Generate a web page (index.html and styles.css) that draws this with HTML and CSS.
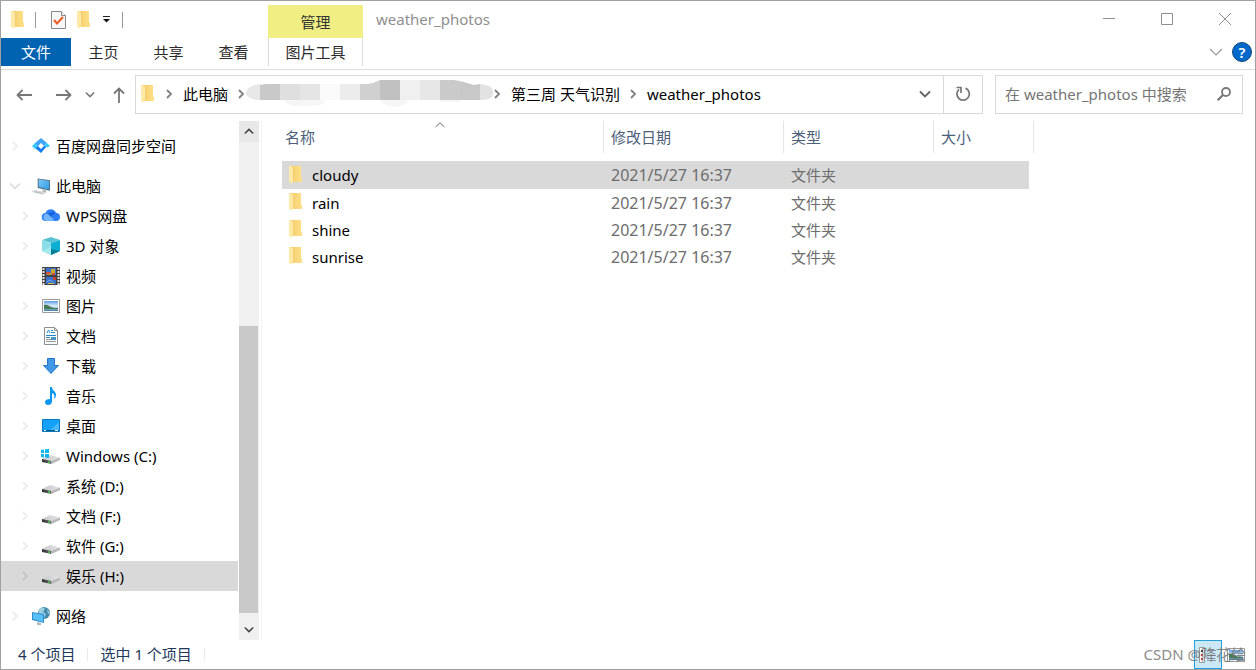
FILE: index.html
```html
<!DOCTYPE html>
<html lang="zh-CN">
<head>
<meta charset="utf-8">
<title>weather_photos</title>
<link rel="stylesheet" href="styles.css">
</head>
<body>
<svg class="defs" aria-hidden="true">
  <defs>
    <linearGradient id="gFolder" x1="0" x2="1"><stop offset="0" stop-color="#f4cd6b"/><stop offset="1" stop-color="#ffe08a"/></linearGradient>
    <linearGradient id="gScreen" x1="0" y1="0" x2="1" y2="1"><stop offset="0" stop-color="#7cc8f5"/><stop offset="1" stop-color="#2d9be8"/></linearGradient>
    <linearGradient id="gSky" x1="0" y1="0" x2="0" y2="1"><stop offset="0" stop-color="#5d9be8"/><stop offset=".5" stop-color="#dff0fa"/><stop offset="1" stop-color="#3d7f9e"/></linearGradient>
    <linearGradient id="gDrive" x1="0" x2="1"><stop offset="0" stop-color="#c9c9cc"/><stop offset="1" stop-color="#e4e4e6"/></linearGradient>
    <linearGradient id="gFront" x1="0" x2="1"><stop offset="0" stop-color="#2c2e30"/><stop offset="1" stop-color="#6b6d70"/></linearGradient>
    <symbol id="folder" viewBox="0 0 13 18"><path d="M2 0h10v11l1 1v4H2z" fill="url(#gFolder)"/><path d="M0 0h1.500l3 2v12.500L3 17.500 0 16z" fill="#ffe9a6"/><path d="M4.500 2v13" stroke="#eec565" stroke-width=".6"/></symbol>
    <symbol id="right" viewBox="0 0 6 10"><path d="M1 1l4 4-4 4" fill="none" stroke="currentColor" stroke-width="1.800"/></symbol>
    <symbol id="down" viewBox="0 0 12 8"><path d="M1 1.500l5 5 5-5" fill="none" stroke="currentColor" stroke-width="1.800"/></symbol>
    <symbol id="drive" viewBox="0 0 18 18"><path d="M0 12l8-4 10 2.500-8 4z" fill="url(#gDrive)"/><path d="M0 12l9.500 2v3L0 15z" fill="url(#gFront)"/><path d="M9.500 14L18 10.500V13l-8.500 4z" fill="#b7b7ba"/><path d="M6 14.200l2 .4v1.400l-2-.4z" fill="#3ddc3d"/></symbol>
    <symbol id="picture" viewBox="0 0 18 18"><path d="M.5 2.500h17v13H.5z" fill="#fff" stroke="#9b9b9b"/><path d="M2 4h14v10H2z" fill="url(#gSky)"/><path d="M2 8c3-1 5 1 7 2s4 1 7 1v1H2z" fill="#487a56"/></symbol>
  </defs>
</svg>
<div class="window">
  <header class="titlebar">
    <div class="quick">
      <svg class="folder" aria-hidden="true"><use href="#folder"/></svg>
      <span class="bar"></span>
      <button class="plain" aria-label="属性"><svg width="15" height="18" viewBox="0 0 15 18"><path d="M.5.5h10l4 4v13H.5z" fill="#f7f7f7" stroke="#8a8a8a"/><path d="M10.500.5v4h4" fill="#fff" stroke="#8a8a8a"/><path d="M3 9l3 3.500 6-6.500" fill="none" stroke="#f15a24" stroke-width="2"/></svg></button>
      <button class="plain new" aria-label="新建文件夹"><svg class="folder"><use href="#folder"/></svg></button>
      <button class="plain more" aria-label="自定义快速访问工具栏"><svg width="7" height="7" viewBox="0 0 7 7"><path d="M0 .5h7" stroke="#222"/><path d="M0 3h7L3.500 6.500z" fill="#111"/></svg></button>
      <span class="bar"></span>
    </div>
    <div class="context">管理</div>
    <h1 class="title">weather_photos</h1>
    <div class="controls">
      <button class="plain" aria-label="最小化"><svg width="12" height="12" viewBox="0 0 12 12"><path d="M0 5.500h12" stroke="#8f8f8f"/></svg></button>
      <button class="plain" aria-label="最大化"><svg width="12" height="12" viewBox="0 0 12 12"><path d="M.5.500h11v11H.5z" fill="none" stroke="#8f8f8f"/></svg></button>
      <button class="plain" aria-label="关闭"><svg width="12" height="12" viewBox="0 0 12 12"><path d="M0 0l12 12M12 0L0 12" stroke="#8f8f8f"/></svg></button>
    </div>
  </header>
  <nav class="ribbon">
    <button class="tab file">文件</button>
    <button class="tab">主页</button>
    <button class="tab">共享</button>
    <button class="tab">查看</button>
    <button class="tab tools">图片工具</button>
    <div class="ribbon-end">
      <button class="plain expand" aria-label="展开功能区"><svg width="12" height="8" viewBox="0 0 12 8"><path d="M0 1l6 6 6-6" fill="none" stroke="#9a9a9a" stroke-width="1.200"/></svg></button>
      <button class="help" aria-label="帮助">?</button>
    </div>
  </nav>
  <div class="location">
    <div class="arrows">
      <button class="plain" aria-label="后退"><svg width="16" height="12" viewBox="0 0 16 12"><path d="M16 6H1.500M6.500 1l-5 5 5 5" fill="none" stroke="#777" stroke-width="1.800"/></svg></button>
      <button class="plain forward" aria-label="前进"><svg width="16" height="12" viewBox="0 0 16 12"><path d="M0 6h14.500M9.500 1l5 5-5 5" fill="none" stroke="#777" stroke-width="1.800"/></svg></button>
      <button class="plain" aria-label="最近位置"><svg class="recent"><use href="#down"/></svg></button>
      <button class="plain" aria-label="上移"><svg width="12" height="16" viewBox="0 0 12 16"><path d="M6 16V1.500M1 6.500l5-5 5 5" fill="none" stroke="#777" stroke-width="1.800"/></svg></button>
    </div>
    <div class="address">
      <svg class="folder" aria-hidden="true"><use href="#folder"/></svg>
      <svg class="sep"><use href="#right"/></svg>
      <button class="plain">此电脑</button>
      <svg class="sep"><use href="#right"/></svg>
      <svg class="mosaic" width="248" height="28" viewBox="0 0 248 28" aria-hidden="true">
        <path d="M14 4C5 5 0 9 0 13s6 7 14 7z" fill="#e8e8e8"/>
        <path d="M14 5l6-1h14v16H14z" fill="#c9c9c9"/><path d="M34 4h20v16H34z" fill="#dfdfdf"/><path d="M54 4h20v16H54z" fill="#e5e5e5"/><path d="M74 4h20v16H74z" fill="#fafafa"/><path d="M94 4h20v16H94z" fill="#ececec"/><path d="M114 4h8q6-1 12-4v20h-20z" fill="#d0d0d0"/><path d="M134 0h20v20h-20z" fill="#c1c1c1"/><path d="M154 0h20v20h-20z" fill="#f0f0f0"/><path d="M174 0h20v20h-20z" fill="#e6e6e6"/><path d="M194 0h14l6 1v19h-20z" fill="#cacaca"/><path d="M214 1l14 4 6-1v16h-20z" fill="#c8c8c8"/><path d="M234 4c10 1 13 3 13 9 0 5-4 7-13 7z" fill="#e2e2e2"/>
        <path d="M38 20h40v4q-8 2-30 2-8-2-10-6zM134 20h28q-2 7-14 7-10-1-14-7zM194 20h20v2h-20z" fill="#f6f6f6"/>
      </svg>
      <svg class="sep"><use href="#right"/></svg>
      <button class="plain">第三周 天气识别</button>
      <svg class="sep"><use href="#right"/></svg>
      <button class="plain">weather_photos</button>
      <button class="plain history" aria-label="以前的位置"><svg class="chevron"><use href="#down"/></svg></button>
      <button class="plain refresh" aria-label="刷新"><svg width="16" height="16" viewBox="0 0 16 16"><path d="M10.500 2.200A6.200 6.200 0 1 1 4 3.300" fill="none" stroke="#777" stroke-width="1.800"/><path d="M1.500 1.500H6V7" fill="none" stroke="#777" stroke-width="1.700"/></svg></button>
    </div>
    <label class="search">
      <input type="text" placeholder="在 weather_photos 中搜索" aria-label="在 weather_photos 中搜索">
      <svg width="14" height="14" viewBox="0 0 14 14"><circle cx="9" cy="5" r="4" fill="none" stroke="#777" stroke-width="1.800"/><path d="M6 8l-5.300 5.300" stroke="#777" stroke-width="2.200"/></svg>
    </label>
  </div>
  <div class="body">
    <nav class="tree">
      <a class="node root" href="#"><svg class="twist"><use href="#right"/></svg><svg class="icon" viewBox="0 0 18 18"><path d="M9 1l6 5-3 3-3-3-3 3-3-3z" fill="#42a5ff"/><path d="M3 6l3 3 3 3 3-3h3l-6 7-6-5z" fill="#167bf2"/><path d="M0 9l3-3 3 3-3 3zM12 9l3-3 3 3-3 1.500z" fill="#36c9ff"/></svg>百度网盘同步空间</a>
      <a class="node root" href="#"><svg class="twist open"><use href="#down"/></svg><svg class="icon" viewBox="0 0 19 18"><path d="M6 1l13 2v11L6 11z" fill="#526b7b"/><path d="M7 2l11 1.800v9L7 10z" fill="url(#gScreen)"/><path d="M11 12l4 1v3h-4z" fill="#b6bdc2"/><path d="M-1 15l5-2 11 3-4 2z" fill="#d5d9dc"/><path d="M2 15l9 2" stroke="#b4babd"/></svg>此电脑</a>
      <a class="node" href="#"><svg class="twist"><use href="#right"/></svg><svg class="icon" viewBox="0 0 18 18"><path d="M4 14a4 4 0 0 1-.5-8A5.500 5.500 0 0 1 14 6a4 4 0 0 1 0 8z" fill="#2d7ff5"/><path d="M3 7c4-1 7 3 9 7H4a4 4 0 0 1-1-7z" fill="#73b6ff"/><path d="M6 7c3-3 6-2 8-1-2 1-4 2-5 4z" fill="#1266df"/></svg>WPS网盘</a>
      <a class="node" href="#"><svg class="twist"><use href="#right"/></svg><svg class="icon" viewBox="0 0 18 18"><path d="M0 3l9-3 9 3-9 3z" fill="#58c2d3"/><path d="M0 3l9 3v12l-9-4z" fill="#8cdfe8"/><path d="M18 3L9 6v12l9-4z" fill="#0eaed0"/><path d="M0 14l9-4v8z" fill="#a5e9ef"/><path d="M9 12l9 2-9 4z" fill="#087e96"/></svg>3D 对象</a>
      <a class="node" href="#"><svg class="twist"><use href="#right"/></svg><svg class="icon" viewBox="0 0 18 18"><path d="M0 0h18v18H0z" fill="#414141"/><path d="M1.500 1v17M16.500 1v17" stroke="#e5e5e5" stroke-width="2" stroke-dasharray="2 1"/><path d="M4 1h10v7H4zM4 10h10v7H4z" fill="#3973cf"/><path d="M5 6h4v2H5zM9 2h4v5H9z" fill="#c9a52a"/><path d="M4 5h4v2H4zM10 6h3v2h-3z" fill="#d44b36"/><path d="M6 16h6v1H6z" fill="#d9bd44"/><path d="M11 10h3v3h-3z" fill="#c13d2d"/><path d="M5 15l3-2 3 2" fill="none" stroke="#77b1e6"/></svg>视频</a>
      <a class="node" href="#"><svg class="twist"><use href="#right"/></svg><svg class="icon"><use href="#picture"/></svg>图片</a>
      <a class="node" href="#"><svg class="twist"><use href="#right"/></svg><svg class="icon" viewBox="0 0 18 18"><path d="M2.500.5h10l3 3v14h-13z" fill="#fff" stroke="#8a8f94"/><path d="M12.500.5v3h3" fill="none" stroke="#8a8f94"/><path d="M5 6l1.500-3L8 6M9 3.500h2M9 5.500h4M4 8.500h10M4 10.500h4" stroke="#2587cf" fill="none"/><path d="M4 12.500h5M4 14.500h10" stroke="#999"/><path d="M9 10h5v3H9z" fill="#4596c4"/></svg>文档</a>
      <a class="node" href="#"><svg class="twist"><use href="#right"/></svg><svg class="icon" viewBox="0 0 18 18"><path d="M5.500 1.500h7v7h4L9 16.500 1.500 8.500h4z" fill="#3f97e5" stroke="#2479c9"/></svg>下载</a>
      <a class="node" href="#"><svg class="twist"><use href="#right"/></svg><svg class="icon" viewBox="0 0 18 18"><path d="M8 0h2c0 4 4 4 4 8 0 2-1 3-2 4 1-4 0-5-2-6v8c0 3-2 4-4 4s-3-1-3-3 2-3 5-3z" fill="#0b96f2"/></svg>音乐</a>
      <a class="node" href="#"><svg class="twist"><use href="#right"/></svg><svg class="icon" viewBox="0 0 18 18"><path d="M.5 2.500h17v12H.5z" fill="#14a1fb" stroke="#0878bf"/><path d="M7 14L17 5v9z" fill="#45b8ff"/><path d="M1 13.500h16" stroke="#075a91"/><path d="M2 13.500h2M13 13.500h3" stroke="#fff"/></svg>桌面</a>
      <a class="node" href="#"><svg class="twist"><use href="#right"/></svg><svg class="icon" viewBox="0 0 18 18"><use href="#drive" width="18" height="18"/><path d="M-1 3l3-.4V6h-3zM3 2.300L7 2v4H3zM-1 7h3v3.400L-1 10zM3 7h4v4l-4-.5z" fill="#10b7ee"/></svg>Windows (C:)</a>
      <a class="node" href="#"><svg class="twist"><use href="#right"/></svg><svg class="icon"><use href="#drive"/></svg>系统 (D:)</a>
      <a class="node" href="#"><svg class="twist"><use href="#right"/></svg><svg class="icon"><use href="#drive"/></svg>文档 (F:)</a>
      <a class="node" href="#"><svg class="twist"><use href="#right"/></svg><svg class="icon"><use href="#drive"/></svg>软件 (G:)</a>
      <a class="node selected" href="#"><svg class="twist"><use href="#right"/></svg><svg class="icon"><use href="#drive"/></svg>娱乐 (H:)</a>
      <a class="node root" href="#"><svg class="twist"><use href="#right"/></svg><svg class="icon" viewBox="0 0 18 18"><circle cx="12" cy="6" r="6" fill="#4388aa"/><path d="M7 3c3-4 5-2 6-1l-2 3 3 2-2 4c-4 0-6-4-5-8zM15 2l3 4-2 1z" fill="#9ccfe1"/><path d="M0 5l12 2v9L0 13z" fill="#318dc9"/><path d="M1 6l10 2v7L1 12z" fill="#58c0fb"/><path d="M5 15l4 1v2H5z" fill="#aab9c2"/></svg>网络</a>
    </nav>
    <div class="scrollbar">
      <button class="plain up" aria-label="向上滚动"><svg class="chevron"><use href="#down"/></svg></button>
      <div class="thumb"></div>
      <button class="plain low" aria-label="向下滚动"><svg class="chevron"><use href="#down"/></svg></button>
    </div>
    <main class="files">
      <table>
        <colgroup><col class="c-name"><col class="c-date"><col class="c-type"><col class="c-size"></colgroup>
        <thead><tr><th><div>名称<svg class="sort" width="10" height="6" viewBox="0 0 10 6"><path d="M.5 5L5 .8 9.500 5" fill="none" stroke="#6b6b6b"/></svg></div></th><th><div>修改日期</div></th><th><div>类型</div></th><th><div>大小</div></th></tr></thead>
        <tbody>
          <tr class="selected"><td><span class="name"><svg class="folder"><use href="#folder"/></svg>cloudy</span></td><td class="date">2021/5/27 16:37</td><td>文件夹</td><td></td></tr>
          <tr><td><span class="name"><svg class="folder"><use href="#folder"/></svg>rain</span></td><td class="date">2021/5/27 16:37</td><td>文件夹</td><td></td></tr>
          <tr><td><span class="name"><svg class="folder"><use href="#folder"/></svg>shine</span></td><td class="date">2021/5/27 16:37</td><td>文件夹</td><td></td></tr>
          <tr><td><span class="name"><svg class="folder"><use href="#folder"/></svg>sunrise</span></td><td class="date">2021/5/27 16:37</td><td>文件夹</td><td></td></tr>
        </tbody>
      </table>
    </main>
  </div>
  <footer class="status">
    <span class="count">4 个项目</span><span class="count">选中 1 个项目</span>
    <div class="views">
      <button class="view active" aria-label="详细信息"><svg width="18" height="16" viewBox="0 0 18 16"><path d="M.5.500h5v15h-5z" fill="#fff" stroke="#999"/><path d="M2 3h2v2H2z" fill="#333"/><path d="M2 7h2v2H2zM2 11h2v2H2z" fill="#d33"/><path d="M8 3.500h9M8 8.500h9M8 13.500h9" stroke="#8b9aa3"/></svg></button>
      <button class="view" aria-label="大缩略图"><svg class="icon"><use href="#picture"/></svg></button>
    </div>
    <span class="watermark">CSDN @降花绘</span>
  </footer>
</div>
</body>
</html>
```
FILE: styles.css
```css
* { box-sizing: border-box; }
body {
  margin: 0;
  font: 15px/20px "Noto Sans", "Noto Sans CJK SC", sans-serif;
  color: #000;
  background: #fff;
}
button, input { font: inherit; color: inherit; }
svg { display: block; flex: none; overflow: visible; }
.defs { position: absolute; width: 0; height: 0; }
.plain { display: flex; align-items: center; justify-content: center; padding: 0; border: 0; background: none; white-space: nowrap; }
.folder { width: 13px; height: 18px; }

.window { display: flex; flex-direction: column; min-height: 100vh; border: 1px solid #a0a0a0; }

.titlebar { display: flex; height: 37px; }
.quick { display: flex; align-items: center; width: 267px; padding-left: 10px; }
.bar { width: 1px; height: 16px; margin: 0 15px 0 11px; background: #999; }
.new { margin-left: 11px; }
.more { margin: 0 1px 0 13px; }
.context { width: 95px; margin-top: 4px; line-height: 34px; text-align: center; color: #333; background: #f1ef84; }
.title { margin: 0 0 0 13px; font-size: 15px; font-weight: 400; line-height: 37px; color: #8f8f8f; }
.controls { display: flex; margin-left: auto; padding-right: 1px; }
.controls .plain { width: 58px; padding-bottom: 1px; }

.ribbon { display: flex; height: 32px; padding-bottom: 3px; border-bottom: 1px solid #dadbdc; }
.tab { width: 65px; padding: 0; border: 0; background: none; color: #2b2b2b; white-space: nowrap; }
.tab.file { width: 70px; color: #fff; background: #0063b1; }
.tab.tools { width: 95px; margin-left: 2px; border: solid #dcdcdc; border-width: 0 1px; }
.ribbon-end { display: flex; align-items: center; gap: 10px; margin-left: auto; padding-right: 3px; }
.help { width: 20px; height: 20px; padding: 0; border: 1px solid #17497d; border-radius: 50%; font-weight: 600; line-height: 18px; color: #fff; background: #0068c9; }

.location { display: flex; height: 51px; padding: 5px 12px 7px 15px; }
.arrows { display: flex; align-items: center; justify-content: space-between; width: 109px; margin-right: 10px; }
.forward { margin: 0 -6px 0 6px; }
.recent { width: 10px; height: 7px; color: #777; }
.chevron { width: 12px; height: 8px; color: #666; }
.address { display: flex; flex: 1; align-items: center; min-width: 0; padding-left: 5px; border: 1px solid #d9d9d9; }
.address .plain { padding-bottom: 2px; }
.address > .folder { margin-bottom: 1px; }
.sep { width: 6px; height: 10px; margin: 0 11px 2px 10px; color: #808080; }
.address > .folder + .sep { margin-left: 12px; }
.mosaic { align-self: flex-start; margin: 4px -10px 0 -9px; }
.history { width: 36px; height: 100%; margin-left: auto; }
.refresh { width: 39px; height: 100%; border-left: 1px solid #d9d9d9; }
.search { display: flex; align-items: center; width: 248px; margin-left: 12px; padding: 0 11px 1px 9px; border: 1px solid #d9d9d9; }
.search input { flex: 1; min-width: 0; padding: 0; border: 0; outline: 0; background: none; }
.search input::placeholder { color: #757575; opacity: 1; }

.body { display: flex; flex: 1; }
.tree { display: flex; flex-direction: column; width: 237px; padding-top: 10px; }
.node { display: flex; align-items: center; height: 30px; padding-left: 21px; color: #000; text-decoration: none; white-space: nowrap; }
.node.root { margin-bottom: 10px; padding-left: 11px; }
.node.root:nth-child(2) { margin-bottom: 0; }
.node.root:last-child { margin: 10px 0 9px; }
.node.selected { background: #d9d9d9; }
.twist { width: 6px; height: 10px; margin-right: 14px; color: #ececec; }
.twist.open { width: 12px; height: 8px; margin: 0 11px 0 -3px; color: #e0e0e0; }
.selected .twist { color: #c4c4c4; }
.icon { width: 18px; height: 18px; }
.node .icon { margin-right: 6px; }
.scrollbar { display: flex; flex-direction: column; width: 20px; margin-left: 1px; background: #f0f0f0; }
.scrollbar .plain.low { height: 27px; padding-top: 5px; }
.scrollbar .plain.up { height: 21px; background: #e8e8e8; }
.up .chevron { transform: rotate(180deg); }
.scrollbar .chevron { width: 10px; height: 7px; color: #444; }
.thumb { height: 287px; margin: auto 1px 0 0; background: #c8c8c8; }
.files { flex: 1; margin-left: 2px; padding-left: 20px; border-left: 1px solid #f3f3f3; }

table { width: 752px; border-collapse: collapse; table-layout: fixed; }
.c-name { width: 322px; }
.c-date { width: 180px; }
.c-type { width: 150px; }
.c-size { width: 100px; }
th { padding: 0 0 8px; font-weight: 400; text-align: left; color: #4c607a; }
th div { position: relative; height: 32px; padding-left: 7px; line-height: 32px; border-right: 1px solid #e5e5e5; }
th:first-child div { padding-left: 3px; }
.sort { position: absolute; top: 1px; left: 50%; margin-left: -8px; }
td { height: 27px; padding: 0 7px; color: #6d6d6d; white-space: nowrap; }
td:first-child { padding-left: 7px; color: #000; }
td.date { font-size: 16px; }
.name { display: flex; align-items: center; gap: 10px; }
.name .folder { margin-bottom: 1px; }
tr.selected td { height: 28px; background: #d9d9d9; }
tr.selected td:last-child { background: linear-gradient(#d9d9d9, #d9d9d9) no-repeat 0 0 / calc(100% - 5px) 100%; }

.status { position: relative; display: flex; align-items: center; height: 29px; color: #1e395b; }
.count { padding: 0 12px; line-height: 13px; border-right: 1px solid #ebebeb; }
.count:first-child { padding-left: 17px; }
.views { display: flex; align-self: stretch; margin-left: auto; padding-right: 5px; }
.view { display: flex; align-items: center; justify-content: center; width: 28px; padding: 0; border: 1px solid transparent; background: none; }
.view.active { border-color: #26a0da; background: #cbe8f6; }
.watermark { position: absolute; right: 9px; top: 4px; font-size: 15px; color: #6f6f6f; opacity: .8; }
```
